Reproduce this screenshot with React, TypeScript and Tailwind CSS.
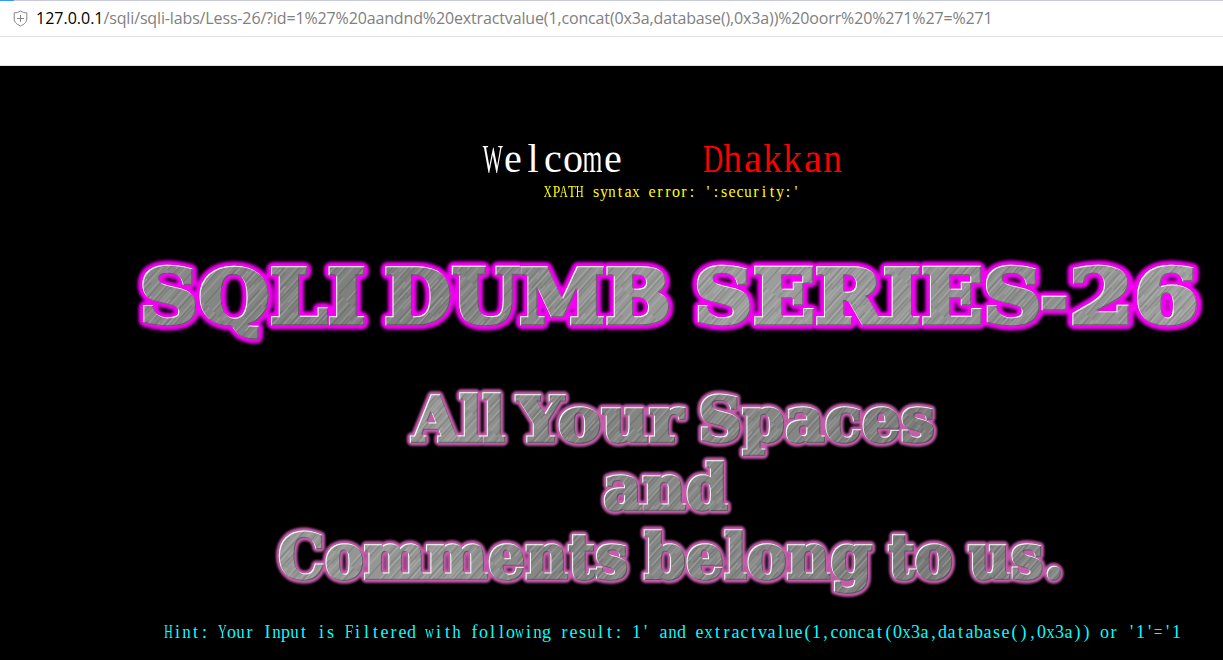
import React from 'react';

type Word = { text: string; x: number; y: number; width: number };

const SERIES: Word[] = [
  { text: 'SQLI', x: 139.5, y: 73, width: 226 },
  { text: 'DUMB', x: 384, y: 73, width: 287 },
  { text: 'SERIES', x: 694, y: 73, width: 348 },
  { text: '-', x: 1040, y: 73, width: 28 },
  { text: '26', x: 1069, y: 73, width: 130 },
];

const MOTTO: Word[] = [
  { text: 'All', x: 412, y: 61, width: 93 },
  { text: 'Your', x: 517, y: 61, width: 166 },
  { text: 'Spaces', x: 698, y: 61, width: 237 },
  { text: 'and', x: 603, y: 129, width: 125 },
  { text: 'Comments', x: 278, y: 198, width: 350 },
  { text: 'belong', x: 644, y: 198, width: 228 },
  { text: 'to', x: 888, y: 198, width: 65 },
  { text: 'us.', x: 968, y: 198, width: 96 },
];

const GLYPH_SCALE: Record<string, number> = {
  W: 0.53, m: 0.64, w: 0.68, D: 0.7, H: 0.68, X: 0.68, A: 0.68, T: 0.8, P: 0.85,
  Y: 0.68, F: 0.85, h: 0.94, k: 0.94, n: 0.94, u: 0.94, x: 0.94, '=': 0.85,
};

function Grid({ text, cell }: { text: string; cell: string }) {
  return (
    <>
      {[...text].map((c, i) => (
        <span key={i} className={`inline-flex justify-center whitespace-pre ${cell}`}>
          <span className="inline-block" style={{ transform: `scaleX(${GLYPH_SCALE[c] ?? 1})` }}>{c}</span>
        </span>
      ))}
    </>
  );
}

function Words({ words, ...rest }: { words: Word[] } & React.SVGProps<SVGGElement>) {
  return (
    <g {...rest}>
      {words.map((w) => (
        <text key={w.text} x={w.x} y={w.y} textLength={w.width} lengthAdjust="spacingAndGlyphs">{w.text}</text>
      ))}
    </g>
  );
}

function MetalText({ id, words, height, size, weight, glow, glowWidth, blur, shades }: {
  id: string; words: Word[]; height: number; size: number; weight: number; glow: string; glowWidth: number; blur: number;
  shades: [number, string][];
}) {
  return (
    <svg width="1223" height={height} viewBox={`0 0 1223 ${height}`} className="block shrink-0" fontFamily="'DejaVu Serif', serif" fontWeight="700" fontSize={size}>
      <defs>
        <filter id={`${id}-glow`} x="0" y="0" width="1223" height={height} filterUnits="userSpaceOnUse">
          <feGaussianBlur stdDeviation={blur} />
        </filter>
        <filter id={`${id}-metal`} x="0" y="0" width="1223" height={height} filterUnits="userSpaceOnUse" colorInterpolationFilters="sRGB">
          <feOffset in="SourceAlpha" dx="1" dy="1" result="shift" />
          <feComposite in="SourceAlpha" in2="shift" operator="out" result="edge" />
          <feFlood floodColor="#fff" />
          <feComposite in2="edge" operator="in" result="light" />
          <feOffset in="SourceAlpha" dx="-1" dy="-1" result="back" />
          <feComposite in="SourceAlpha" in2="back" operator="out" result="low" />
          <feFlood floodColor="#4a404a" floodOpacity="0.65" />
          <feComposite in2="low" operator="in" result="dark" />
          <feMerge>
            <feMergeNode in="SourceGraphic" />
            <feMergeNode in="dark" />
            <feMergeNode in="light" />
          </feMerge>
        </filter>
        <linearGradient id={`${id}-shade`} gradientUnits="userSpaceOnUse" x1="130" y1="0" x2="1200" y2="60">
          {shades.map(([at, color]) => <stop key={at} offset={at} stopColor={color} />)}
        </linearGradient>
        <pattern id={`${id}-lines`} width="31" height="97" patternUnits="userSpaceOnUse" patternTransform="rotate(42)">
          <path d="M1 0V40M4.5 20V77M8 0V30M12.5 44V97M15 0V50M19.5 30V90M23 0V36M26 50V97M29 12V65" stroke="#fff" strokeOpacity="0.28" strokeWidth="0.8" />
          <path d="M2.5 50V97M6 0V45M10 20V80M14 60V97M17.5 0V60M21 50V97M24.5 10V55M28 0V45" stroke="#000" strokeOpacity="0.2" strokeWidth="0.8" />
        </pattern>
        <pattern id={`${id}-brush`} width="1223" height={height} patternUnits="userSpaceOnUse">
          <rect width="1223" height={height} fill={`url(#${id}-shade)`} />
          <rect width="1223" height={height} fill={`url(#${id}-lines)`} />
        </pattern>
      </defs>
      <Words words={words} fill={glow} stroke={glow} strokeWidth={glowWidth} strokeLinejoin="round" filter={`url(#${id}-glow)`} />
      <Words words={words} fill={`url(#${id}-brush)`} stroke={`url(#${id}-brush)`} strokeWidth={weight} filter={`url(#${id}-metal)`} />
    </svg>
  );
}

export default function App() {
  return (
    <div className="flex h-[660px] w-[1223px] flex-col overflow-hidden bg-black">
      <header className="flex h-[66px] shrink-0 flex-col border-b border-[#e0e0e4] bg-white">
        <div className="flex h-px bg-[#c9cbd8]"><div className="w-3.5 bg-[#3399ff]" /></div>
        <div className="flex h-9 items-center border-b border-[#e1e5ea] pl-[13px]">
          <svg width="15" height="17" viewBox="0 0 15 17" fill="none" stroke="#858585" className="mr-2 shrink-0">
            <path d="M7.5 1C5.5 2.5 3.3 2.8 1.2 2.8V9c0 3.5 3 5.5 6.3 7 3.3-1.5 6.3-3.5 6.3-7V2.8C11.7 2.8 9.5 2.5 7.5 1Z" />
            <path d="M7.5 5v7M4 8.5h7" />
          </svg>
          <div className="-mt-0.5 whitespace-nowrap font-['Open_Sans','Noto_Sans',sans-serif] text-base leading-5 tracking-[-0.14px] text-[#808080]">
            <span className="tracking-normal text-black">127.0.0.1</span>/sqli/sqli-labs/Less-26/?id=1%27%20aandnd%20extractvalue(1,concat(0x3a,database(),0x3a))%20oorr%20%271%27=%271
          </div>
        </div>
      </header>
      <main className="flex flex-col pt-[70px] font-['Liberation_Serif',serif]">
        <div className="h-[46px] whitespace-nowrap pl-[483px] text-[40px] leading-[46px] text-white">
          <Grid text="Welcome    " cell="w-[20px]" />
          <span className="text-[#ff0000]"><Grid text="Dhakkan" cell="w-[20px]" /></span>
        </div>
        <div className="h-5 whitespace-nowrap pl-[544px] text-base leading-5 text-[#ffff00]">
          <Grid text="XPATH syntax error: ':security:'" cell="w-2" />
        </div>
        <div className="mt-12">
          <MetalText id="series" words={SERIES} height={100} size={74} weight={4.5} glow="#f500f5" glowWidth={13} blur={1.8}
            shades={[[0, '#898b89'], [0.2, '#7e807e'], [0.35, '#848684'], [0.47, '#979997'], [0.6, '#9c9e9c'], [0.75, '#939593'], [0.85, '#8c8e8c'], [1, '#a0a2a0']]} />
        </div>
        <div className="mt-[30px]">
          <MetalText id="motto" words={MOTTO} height={230} size={62} weight={3.5} glow="#c65cab" glowWidth={9.5} blur={1.2}
            shades={[[0, '#a0a2a0'], [0.2, '#949694'], [0.3, '#959795'], [0.42, '#7f817f'], [0.5, '#858785'], [0.62, '#858785'], [0.75, '#787a78'], [1, '#949694']]} />
        </div>
        <div className="mt-3 h-5 whitespace-nowrap pl-[164px] text-[18px] leading-5 text-[#00ffff]">
          <Grid text="Hint: Your Input is Filtered with following result: 1' and extractvalue(1,concat(0x3a,database(),0x3a)) or '1'='1" cell="w-[9px]" />
        </div>
      </main>
    </div>
  );
}
